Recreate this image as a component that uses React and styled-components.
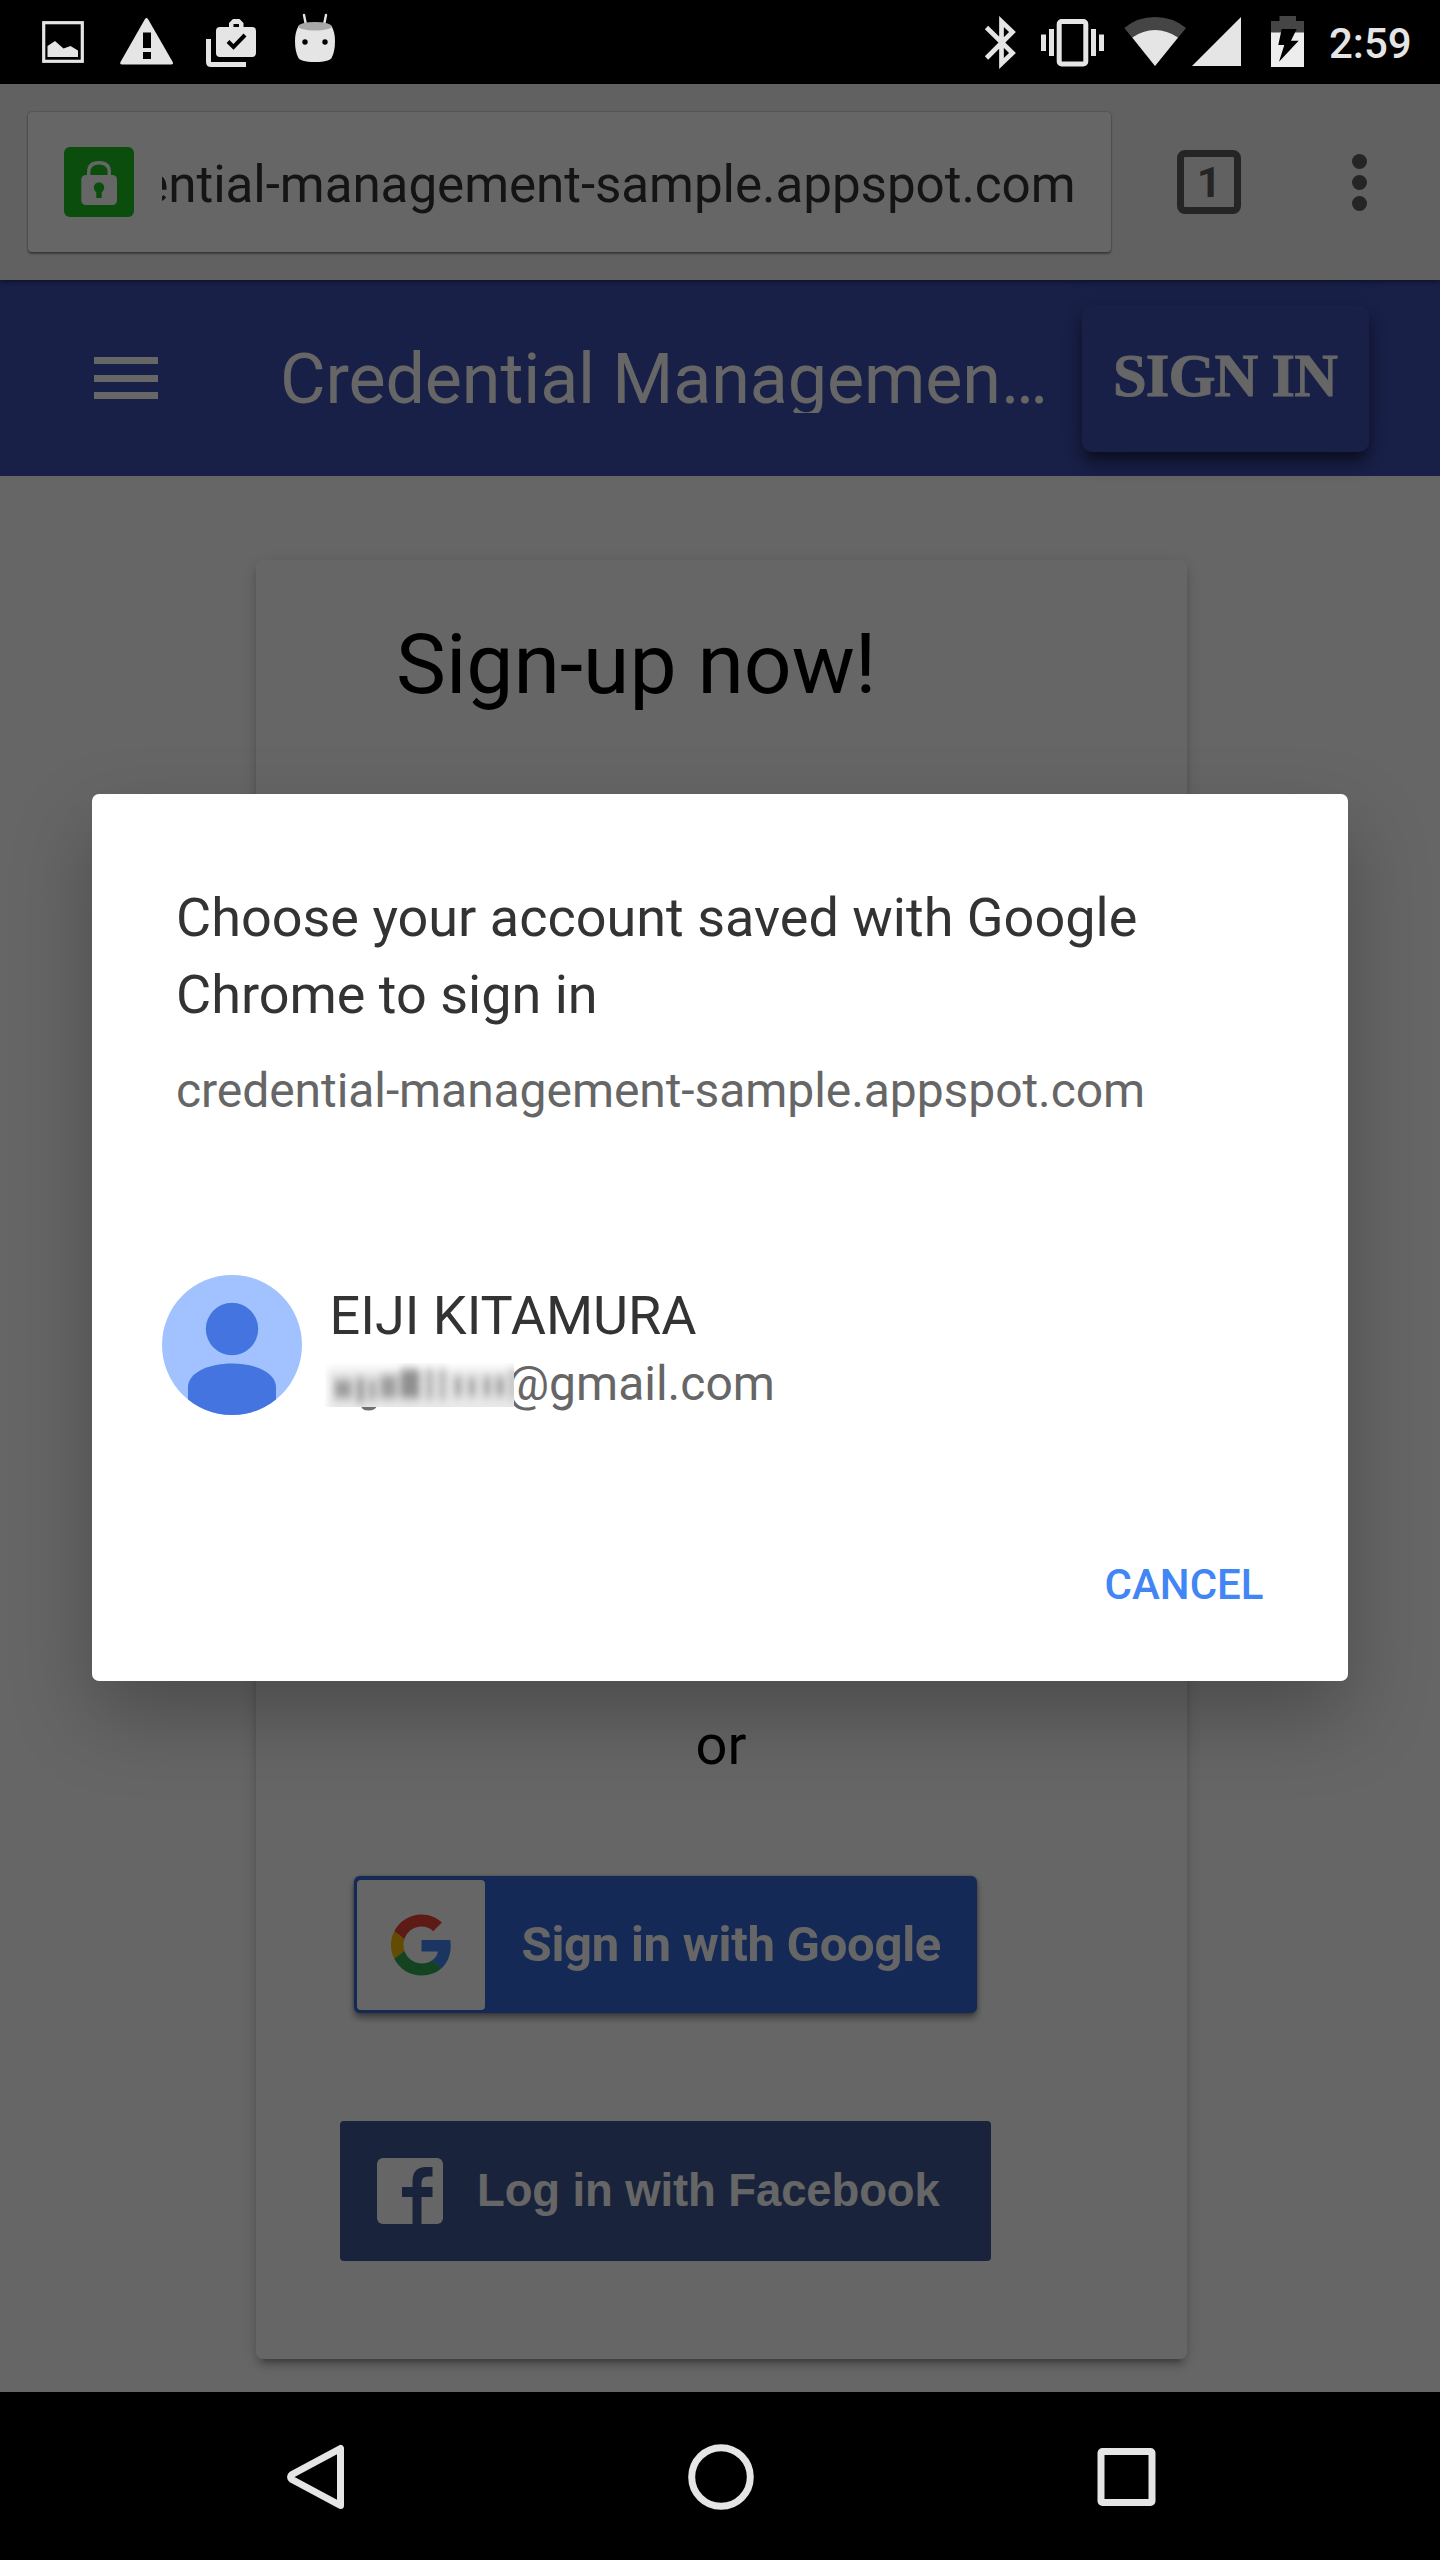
import React from "react";
import styled, { createGlobalStyle } from "styled-components";

const GlobalStyle = createGlobalStyle`
  * { box-sizing: border-box; }
  body { margin: 0; background: #000; font-family: Roboto, "Noto Sans", sans-serif; }
  h1, h2, p { margin: 0; font-weight: 400; }
  svg { display: block; flex: none; }
  button { border: 0; background: none; padding: 0; font: inherit; }
`;

const Screen = styled.div`
  width: 1440px;
  height: 2560px;
  display: flex;
  flex-direction: column;
  overflow: hidden;
  background: #000;
`;

/* ---------- system bars ---------- */

const StatusBar = styled.header`
  height: 84px;
  flex: none;
  display: flex;
  background: #000;
  color: #e5e5e5;
`;

const StatusGlyph = styled.svg`
  height: 84px;
  width: ${(p) => p.$w}px;
  margin-left: ${(p) => p.$gap}px;
  overflow: visible;
`;

const Clock = styled.span`
  margin-left: 25px;
  font-size: 42px;
  font-weight: 500;
  line-height: 88px;
`;

function Glyph({ x, w, gap, children }) {
  return (
    <StatusGlyph $w={w} $gap={gap} viewBox={`${x} 0 ${w} 84`} fill="#e5e5e5">
      {children}
    </StatusGlyph>
  );
}

const NavBar = styled.nav`
  height: 168px;
  flex: none;
  display: flex;
  align-items: center;
  justify-content: center;
  gap: 339px;
  padding: 1px 0 0 1px;
  background: #000;
`;

const NavIcon = styled.svg`
  width: 66px;
  height: 66px;
  fill: none;
  stroke: #e5e5e5;
  stroke-width: 7;
  stroke-linejoin: round;
`;

/* ---------- browser ---------- */

const Window = styled.main`
  position: relative;
  flex: 1;
  min-height: 0;
  display: flex;
  flex-direction: column;
  background: #fff;
`;

const Toolbar = styled.div`
  height: 196px;
  flex: none;
  display: flex;
  align-items: center;
  padding: 0 73px 0 28px;
  background: #f2f2f2;
  box-shadow: 0 1px 6px rgba(0, 0, 0, 0.6);
  z-index: 1;
`;

const UrlBox = styled.div`
  width: 1083px;
  height: 140px;
  display: flex;
  align-items: center;
  padding: 0 35.5px 0 36px;
  border-radius: 4px;
  background: #fff;
  box-shadow: 0 0 2px rgba(0, 0, 0, 0.4), 0 2px 2px rgba(0, 0, 0, 0.35);
`;

const LockBadge = styled.div`
  width: 70px;
  height: 70px;
  flex: none;
  border-radius: 6px;
  background: #19c120;
`;

const UrlText = styled.div`
  flex: 1;
  min-width: 0;
  margin-left: 28px;
  display: flex;
  justify-content: flex-end;
  overflow: hidden;
  white-space: nowrap;
  font-size: 51.2px;
  letter-spacing: -0.07px;
  line-height: 70px;
  padding-top: 5px;
  color: #333;
`;

const TabCount = styled.div`
  width: 64px;
  height: 64px;
  margin-left: 66px;
  border: 7px solid #5c5c5c;
  border-radius: 8px;
  color: #5c5c5c;
  font-size: 43px;
  font-weight: 700;
  line-height: 51px;
  text-align: center;
`;

const MenuDots = styled.div`
  margin-left: auto;
  display: flex;
  flex-direction: column;
  gap: 6px;
`;

const Dot = styled.span`
  width: 15px;
  height: 15px;
  border-radius: 50%;
  background: #5c5c5c;
`;

/* ---------- page ---------- */

const AppHeader = styled.div`
  height: 196px;
  flex: none;
  display: flex;
  align-items: center;
  padding-left: 94px;
  background: #3f51b5;
  color: #fff;
`;

const Burger = styled.div`
  width: 64px;
  display: flex;
  flex-direction: column;
  gap: 10.5px;
`;

const BurgerLine = styled.span`
  height: 7px;
  background: #fff;
`;

const AppTitle = styled.h1`
  width: 775px;
  height: 68px;
  margin: 2px 0 0 122px;
  overflow: hidden;
  white-space: nowrap;
  font-size: 70px;
  letter-spacing: -0.1px;
  line-height: 68px;
`;

const SignInButton = styled.button`
  width: 287px;
  height: 147px;
  margin-left: 26.500px;
  padding-bottom: 5px;
  border-radius: 10px;
  color: #fff;
  font-family: "Liberation Serif", serif;
  font-weight: 700;
  font-size: 60.5px;
  letter-spacing: -0.9px;
  -webkit-text-stroke: 0.8px #fff;
  text-align: center;
  background: #3f51b5;
  box-shadow: 0 14px 17px rgba(0, 0, 0, 0.18), 0 3.5px 35px rgba(0, 0, 0, 0.14),
    0 8px 14px -3px rgba(0, 0, 0, 0.5);
`;

const Card = styled.section`
  width: 931px;
  height: 1799px;
  margin: 84px 0 0 255.5px;
  padding: 55px 84px 98px;
  display: flex;
  flex-direction: column;
  justify-content: space-between;
  border-radius: 7px;
  background: #fff;
  box-shadow: 0 7px 7px rgba(0, 0, 0, 0.14), 0 3.5px 17.5px rgba(0, 0, 0, 0.12),
    0 10.5px 3.5px -7px rgba(0, 0, 0, 0.2);
`;

const CardTitle = styled.h2`
  padding-left: 56.5px;
  font-size: 84px;
  line-height: 100px;
  color: #000;
`;

const Providers = styled.div`
  display: flex;
  flex-direction: column;
`;

const Or = styled.p`
  font-size: 56px;
  line-height: 66px;
  text-align: center;
  color: #000;
`;

const GoogleButton = styled.button`
  width: 623px;
  height: 137px;
  margin: 98px 0 0 14.5px;
  padding: 3px;
  display: flex;
  align-items: center;
  border-radius: 6px;
  background: #3367d6;
  color: #fff;
  box-shadow: 0 5px 7px rgba(0, 0, 0, 0.4), 0 0 3px rgba(0, 0, 0, 0.3);
`;

const GoogleTile = styled.span`
  width: 128px;
  height: 130px;
  display: flex;
  align-items: center;
  justify-content: center;
  border-radius: 4px;
  background: #fff;
`;

const GoogleLabel = styled.span`
  margin-left: 36.5px;
  font-size: 49px;
  font-weight: 700;
  letter-spacing: -0.27px;
  line-height: 58px;
  white-space: nowrap;
`;

const FacebookButton = styled.button`
  width: 651px;
  height: 140px;
  margin-top: 108px;
  padding-left: 37px;
  display: flex;
  align-items: center;
  border-radius: 4px;
  background: #405794;
  color: #fff;
`;

const FacebookLabel = styled.span`
  margin-left: 34.5px;
  font-family: "Liberation Sans", sans-serif;
  font-size: 45.5px;
  font-weight: 700;
  letter-spacing: -0.12px;
  line-height: 54px;
  white-space: nowrap;
`;

/* ---------- dialog ---------- */

const Scrim = styled.div`
  position: absolute;
  inset: 0;
  z-index: 2;
  display: flex;
  align-items: center;
  justify-content: center;
  padding-bottom: 2px;
  background: rgba(0, 0, 0, 0.6);
`;

const Dialog = styled.div`
  width: 1256px;
  height: 887px;
  padding: 85px 84.5px 0 70px;
  display: flex;
  flex-direction: column;
  border-radius: 7px;
  background: #fff;
  box-shadow: 0 35px 80px rgba(0, 0, 0, 0.26);
`;

const DialogTitle = styled.h2`
  padding-left: 14px;
  font-size: 54px;
  line-height: 77px;
  color: #333;
`;

const DialogOrigin = styled.p`
  margin-top: 29px;
  padding-left: 14px;
  font-size: 48px;
  letter-spacing: -0.07px;
  line-height: 58px;
  color: #666;
`;

const Account = styled.div`
  height: 140px;
  margin-top: 155px;
  display: flex;
`;

const AccountText = styled.div`
  display: flex;
  flex-direction: column;
  gap: 7px;
  margin-left: 27.5px;
  padding-top: 9px;
`;

const AccountName = styled.div`
  font-size: 54px;
  line-height: 64px;
  color: #333;
`;

const AccountMail = styled.div`
  display: flex;
  font-size: 48px;
  line-height: 58px;
  color: #666;
`;

const Redaction = styled.svg`
  width: 189px;
  height: 50px;
  margin: 8px -8px 0 -4.500px;
  z-index: 1;
`;

const Cancel = styled.button`
  margin-top: 145px;
  align-self: flex-end;
  font-size: 42px;
  font-weight: 500;
  line-height: 50px;
  color: #4285f4;
`;

const smudges = [
  [9, 16, 18, 20, 0.5],
  [31, 14, 9, 26, 0.5],
  [44, 16, 7, 22, 0.5],
  [55, 12, 17, 24, 0.5],
  [75, 6, 20, 30, 0.6],
  [101, 5, 7, 32, 0.4],
  [114, 5, 7, 32, 0.35],
  [129, 13, 8, 21, 0.45],
  [143, 14, 8, 20, 0.45],
  [158, 13, 8, 21, 0.45],
  [171, 13, 8, 21, 0.5],
  [184, 5, 7, 32, 0.3],
];

export default function App() {
  return (
    <>
      <GlobalStyle />
      <Screen>
        <StatusBar>
          <Glyph x={42} w={42} gap={42}>
            <rect x="43.7" y="22.7" width="38.6" height="38.6" fill="none" stroke="#e5e5e5" strokeWidth="3.2" />
            <path d="M47.5 46 55 41 63.500 48.500 70.500 46 78 50.500V57H47.500Z" />
          </Glyph>
          <Glyph x={120} w={53} gap={36}>
            <path d="M145 19q1.500-2 3 0L172.700 62q1 2.500-1.500 2.500H122q-2.500 0-1.500-2.500Z" />
            <path d="M143 32.500h8V48h-8zM143 52h8v7h-8z" fill="#000" />
          </Glyph>
          <Glyph x={206} w={50} gap={33}>
            <path d="M208.500 39V62q0 2.500 2.500 2.500H246" fill="none" stroke="#e5e5e5" strokeWidth="5" />
            <path
              fillRule="evenodd"
              d="M229 27v-4l4-4h6.500l4 4v4H252q4 0 4 4V53q0 4-4 4H220q-4 0-4-4V31q0-4 4-4ZM233.500 27h5.500v-3h-5.500Z"
            />
            <path d="M228 41.500 233.500 47 245 35" fill="none" stroke="#000" strokeWidth="4" />
          </Glyph>
          <Glyph x={295} w={40} gap={39}>
            <path d="M304 15 306 25M326 15 324 25" stroke="#e5e5e5" strokeWidth="2.400" strokeLinecap="round" />
            <path d="M298.500 26q16-4 33 0 3.500 6 3.500 15 0 10-3 16-1.500 5-17 5t-17-5q-3-6-3-16 0-9 3.500-15Z" />
            <ellipse cx="315" cy="26.200" rx="16.700" ry="4.300" fill="#a8a8a8" />
            <circle cx="305" cy="42" r="2.700" fill="#000" />
            <circle cx="325" cy="42" r="2.700" fill="#000" />
          </Glyph>
          <Glyph x={985} w={31} gap={650}>
            <path
              d="M986.500 27.500 1012.500 53 1001.500 63.500V21.500L1012.500 32 986.500 58"
              fill="none"
              stroke="#e5e5e5"
              strokeWidth="4.700"
            />
          </Glyph>
          <Glyph x={1041} w={63} gap={25}>
            <rect x="1059.200" y="21.500" width="26.600" height="42.500" rx="2.500" fill="none" stroke="#e5e5e5" strokeWidth="5" />
            <path d="M1041 34.500h5v16.500h-5zM1049 29h5v27h-5zM1091 29h5v27h-5zM1099 34.500h5v16.500h-5z" />
          </Glyph>
          <Glyph x={1124} w={62} gap={20}>
            <path d="M1155 66 1124.300 28Q1137 17 1155 17T1186 28Z" fill="#454545" />
            <path d="M1155 66 1132.300 37.500Q1143 30 1155 30T1178 37.500Z" />
          </Glyph>
          <Glyph x={1192} w={49} gap={6}>
            <path d="M1192 66H1241V17Z" />
          </Glyph>
          <Glyph x={1271} w={33} gap={30}>
            <path d="M1279.500 16H1296V21H1304V33H1271V21H1279.500Z" fill="#454545" />
            <path d="M1271 32.500h33V67h-33z" fill="#ededed" />
            <path d="M1281.700 29H1296.700L1291 40.700H1298.700L1279 61.700 1284.300 45H1278.300Z" fill="#000" />
          </Glyph>
          <Clock>2:59</Clock>
        </StatusBar>

        <Window>
          <Toolbar>
            <UrlBox>
              <LockBadge>
                <svg width="70" height="70" viewBox="64 147 70 70">
                  <rect x="81.300" y="175" width="35.700" height="30" rx="4.500" fill="#fff" />
                  <path d="M88.700 176V172Q88.700 162.700 99 162.700T109.300 172V176" fill="none" stroke="#fff" strokeWidth="3.400" />
                  <circle cx="99" cy="187.500" r="5.200" fill="#19c120" />
                  <path d="M96.300 189h5.400v9h-5.400z" fill="#19c120" />
                </svg>
              </LockBadge>
              <UrlText>credential-management-sample.appspot.com</UrlText>
            </UrlBox>
            <TabCount>1</TabCount>
            <MenuDots>
              <Dot />
              <Dot />
              <Dot />
            </MenuDots>
          </Toolbar>

          <AppHeader>
            <Burger>
              <BurgerLine />
              <BurgerLine />
              <BurgerLine />
            </Burger>
            <AppTitle>Credential Managemen…</AppTitle>
            <SignInButton>SIGN IN</SignInButton>
          </AppHeader>

          <Card>
            <CardTitle>Sign-up now!</CardTitle>
            <Providers>
              <Or>or</Or>
              <GoogleButton>
                <GoogleTile>
                  <svg width="61" height="62" viewBox="0 0 48 48">
                    <path fill="#ea4335" d="M24 9.500c3.540 0 6.710 1.220 9.210 3.600l6.850-6.850C35.900 2.380 30.470 0 24 0 14.620 0 6.510 5.380 2.560 13.220l7.980 6.190C12.430 13.720 17.740 9.500 24 9.500z" />
                    <path fill="#4285f4" d="M46.980 24.550c0-1.570-.15-3.090-.38-4.550H24v9.020h12.940c-.58 2.960-2.260 5.480-4.780 7.180l7.730 6c4.510-4.180 7.090-10.360 7.090-17.650z" />
                    <path fill="#fbbc05" d="M10.530 28.590c-.48-1.450-.76-2.990-.76-4.590s.27-3.140.76-4.590l-7.980-6.190C.92 16.460 0 20.120 0 24c0 3.880.92 7.540 2.560 10.780l7.970-6.190z" />
                    <path fill="#34a853" d="M24 48c6.480 0 11.930-2.130 15.890-5.810l-7.730-6c-2.150 1.450-4.920 2.300-8.160 2.300-6.260 0-11.570-4.220-13.470-9.910l-7.980 6.190C6.510 42.620 14.620 48 24 48z" />
                  </svg>
                </GoogleTile>
                <GoogleLabel>Sign in with Google</GoogleLabel>
              </GoogleButton>
              <FacebookButton>
                <svg width="66" height="66" viewBox="0 0 66 66">
                  <rect width="66" height="66" rx="6" fill="#fff" />
                  <path
                    fill="#405794"
                    d="M35.500 66V39H25V29h10.500v-5.500Q35.500 9 49 9h6.500v9.500H51q-6.500 0-6.500 6V29h11v10h-11V66Z"
                  />
                </svg>
                <FacebookLabel>Log in with Facebook</FacebookLabel>
              </FacebookButton>
            </Providers>
          </Card>

          <Scrim>
            <Dialog>
              <DialogTitle>
                Choose your account saved with Google
                <br />
                Chrome to sign in
              </DialogTitle>
              <DialogOrigin>credential-management-sample.appspot.com</DialogOrigin>
              <Account>
                <svg width="140" height="140" viewBox="0 0 140 140">
                  <clipPath id="avatar">
                    <circle cx="70" cy="70" r="70" />
                  </clipPath>
                  <g clipPath="url(#avatar)">
                    <path d="M0 0h140v140H0z" fill="#a1c2ff" />
                    <circle cx="70" cy="54" r="26.200" fill="#4374e0" />
                    <path d="M26 140V112C26 98 46 88.500 70 88.500S114 98 114 112V140Z" fill="#4374e0" />
                  </g>
                </svg>
                <AccountText>
                  <AccountName>EIJI KITAMURA</AccountName>
                  <AccountMail>
                    <Redaction viewBox="0 0 189 50">
                      <defs>
                        <filter id="soft" x="-20%" y="-20%" width="140%" height="140%">
                          <feGaussianBlur stdDeviation="3.6 5" />
                        </filter>
                        <clipPath id="strip">
                          <rect width="189" height="44" />
                        </clipPath>
                      </defs>
                      <path d="M36 43H52Q50 47.500 43.500 47.500T36 43Z" fill="#707070" />
                      <rect width="189" height="44" fill="#fff" />
                      <g clipPath="url(#strip)">
                        <g filter="url(#soft)">
                          <rect x="3" y="6" width="195" height="52" fill="#e9e9e9" />
                          {smudges.map(([x, y, w, h, o]) => (
                            <rect key={x} x={x} y={y} width={w} height={h} fill="#555" opacity={o} />
                          ))}
                        </g>
                      </g>
                    </Redaction>
                    <span>@gmail.com</span>
                  </AccountMail>
                </AccountText>
              </Account>
              <Cancel>CANCEL</Cancel>
            </Dialog>
          </Scrim>
        </Window>

        <NavBar>
          <NavIcon viewBox="0 0 66 66">
            <path d="M57.500 4.500V61.500L9 35.500Q6 33 9 30.500Z" />
          </NavIcon>
          <NavIcon viewBox="0 0 66 66">
            <circle cx="33" cy="33" r="29.300" />
          </NavIcon>
          <NavIcon viewBox="0 0 66 66">
            <rect x="8" y="7.500" width="51" height="51" rx="1.500" />
          </NavIcon>
        </NavBar>
      </Screen>
    </>
  );
}
